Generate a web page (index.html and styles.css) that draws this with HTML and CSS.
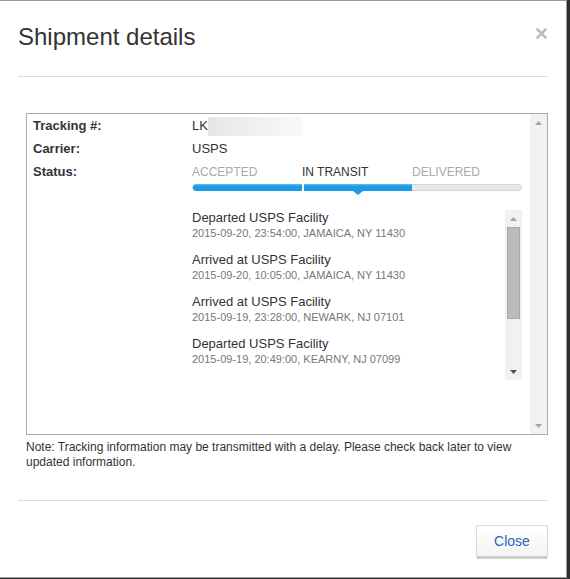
FILE: index.html
```html
<!doctype html>
<html lang="en">
 <head>
  <meta charset="UTF-8">
  <title>Shipment details</title>
  <link rel="stylesheet" href="styles.css">
 </head>
 <body>

  <div class="modal">
    <div class="modal-header">
      <h3 class="modal-title">Shipment details</h3>
      <svg class="close-x" width="11" height="11" viewBox="0 0 11 11">
        <path d="M1.5 1.5 L9.5 9.5 M9.5 1.5 L1.5 9.5" stroke="#bdbdbd" stroke-width="2.6" stroke-linecap="square"/>
      </svg>
    </div>

    <div class="modal-body">
      <div class="scroll-box">
        <div class="scroll-content">
          <div class="info-row">
            <span class="label">Tracking #:</span>
            <span class="value">LK<span class="redacted"></span></span>
          </div>
          <div class="info-row">
            <span class="label">Carrier:</span>
            <span class="value">USPS</span>
          </div>
          <div class="info-row">
            <span class="label">Status:</span>
            <div class="value">
              <div class="steps">
                <span class="step">ACCEPTED</span>
                <span class="step current">IN TRANSIT</span>
                <span class="step">DELIVERED</span>
              </div>
              <div class="progress">
                <div class="fill"></div>
                <div class="fill second"><span class="pointer"></span></div>
              </div>

              <div class="events">
                <div class="events-list">
                  <div class="event">
                    <div class="event-title">Departed USPS Facility</div>
                    <div class="event-meta">2015-09-20, 23:54:00, JAMAICA, NY 11430</div>
                  </div>
                  <div class="event">
                    <div class="event-title">Arrived at USPS Facility</div>
                    <div class="event-meta">2015-09-20, 10:05:00, JAMAICA, NY 11430</div>
                  </div>
                  <div class="event">
                    <div class="event-title">Arrived at USPS Facility</div>
                    <div class="event-meta">2015-09-19, 23:28:00, NEWARK, NJ 07101</div>
                  </div>
                  <div class="event">
                    <div class="event-title">Departed USPS Facility</div>
                    <div class="event-meta">2015-09-19, 20:49:00, KEARNY, NJ 07099</div>
                  </div>
                </div>
                <div class="scrollbar">
                  <div class="sb-btn"><svg width="7" height="4"><polygon points="0,4 3.5,0 7,4" fill="#a3a3a3"/></svg></div>
                  <div class="sb-thumb"></div>
                  <div class="sb-space"></div>
                  <div class="sb-btn"><svg width="7" height="4"><polygon points="0,0 7,0 3.5,4" fill="#505050"/></svg></div>
                </div>
              </div>
            </div>
          </div>
        </div>

        <div class="scrollbar">
          <div class="sb-btn"><svg width="7" height="4"><polygon points="0,4 3.5,0 7,4" fill="#a3a3a3"/></svg></div>
          <div class="sb-space"></div>
          <div class="sb-btn"><svg width="7" height="4"><polygon points="0,0 7,0 3.5,4" fill="#a3a3a3"/></svg></div>
        </div>
      </div>

      <p class="note">Note: Tracking information may be transmitted with a delay. Please check back later to view updated information.</p>
    </div>

    <div class="modal-footer">
      <button class="btn">Close</button>
    </div>
  </div>

 </body>
</html>
```

FILE: styles.css
```css
/* reset */
* { box-sizing: content-box; }

body {
  margin: 0;
  background: #2e2f31;
  font-family: "Liberation Sans", Arial, sans-serif;
  color: #333;
}

.modal {
  width: 566px;
  height: 576px;
  background: #fff;
  border: 1px solid #9c9c9c;
  border-left: 0;
  display: flex;
  flex-direction: column;
}

/* header */
.modal-header {
  margin: 0 18px;
  padding: 23px 0 26px;
  border-bottom: 1px solid #dcdcdc;
  display: flex;
  justify-content: space-between;
  align-items: flex-start;
}
.modal-title {
  margin: 0;
  font-size: 24px;
  font-weight: normal;
  line-height: 26px;
}
.close-x {
  margin-top: 4px;
  margin-right: 1px;
}

/* body */
.modal-body {
  padding: 36px 18px 0 26px;
}
.scroll-box {
  height: 320px;
  border: 1px solid #ababab;
  display: flex;
}
.scroll-content {
  flex: 1;
  padding-left: 6px;
}

.info-row {
  display: flex;
  align-items: flex-start;
  font-size: 13px;
  line-height: 23px;
}
.label {
  flex: none;
  width: 159px;
  font-weight: bold;
}
.redacted {
  display: inline-block;
  width: 94px;
  height: 19px;
  vertical-align: middle;
  background: linear-gradient(to right, #e6e6e6, #f1f1f1 55%, #f9f9f9);
}

/* status steps */
.steps {
  display: flex;
  font-size: 12px;
  line-height: 24px;
  color: #aaa;
  height: 23px;
}
.step { width: 110px; }
.step.current { color: #333; }

.progress {
  margin-top: 1px;
  width: 328px;
  height: 5px;
  border: 1px solid #d4d4d4;
  border-radius: 4px;
  background: #e8e8e8;
  display: flex;
}
.fill {
  width: 109px;
  margin: -1px 0;
  height: 7px;
  background: linear-gradient(#62bdef, #1a9be3 35%);
  border-radius: 4px 0 0 4px;
}
.fill.second {
  position: relative;
  width: 108px;
  border-left: 2px solid #fff;
  border-radius: 0;
}
.pointer {
  position: absolute;
  left: 50%;
  bottom: -4px;
  margin-left: -5px;
  border-left: 5px solid transparent;
  border-right: 5px solid transparent;
  border-top: 4px solid #1a9be3;
}

/* events */
.events {
  margin-top: 19px;
  width: 330px;
  height: 170px;
  display: flex;
}
.events-list {
  flex: 1;
  overflow: hidden;
}
.event { margin-bottom: 12px; }
.event-title {
  font-size: 13px;
  line-height: 16px;
}
.event-meta {
  font-size: 11px;
  line-height: 14px;
  color: #777;
}

/* fake scrollbars */
.scrollbar {
  flex: none;
  width: 17px;
  background: #f1f1f1;
  display: flex;
  flex-direction: column;
}
.sb-btn {
  height: 17px;
  display: flex;
  align-items: center;
  justify-content: center;
}
.sb-btn svg { display: block; }
.sb-thumb {
  margin: 0 2px;
  height: 90px;
  background: #bcbcbc;
  border: 1px solid #a8a8a8;
}
.sb-space { flex: 1; }

.note {
  margin: 5px 0 0;
  font-size: 12px;
  line-height: 15px;
}

/* footer */
.modal-footer {
  margin: 30px 18px 0;
  padding-top: 24px;
  border-top: 1px solid #dcdcdc;
  display: flex;
  justify-content: flex-end;
}
.btn {
  box-sizing: border-box;
  width: 72px;
  height: 34px;
  padding: 0;
  font-family: "Liberation Sans", Arial, sans-serif;
  font-size: 14px;
  color: #2b62c0;
  background: linear-gradient(#fff, #f4f4f4);
  border: 1px solid #dcdcdc;
  border-bottom: 3px solid #cdcdcd;
  border-radius: 2px;
}
```
